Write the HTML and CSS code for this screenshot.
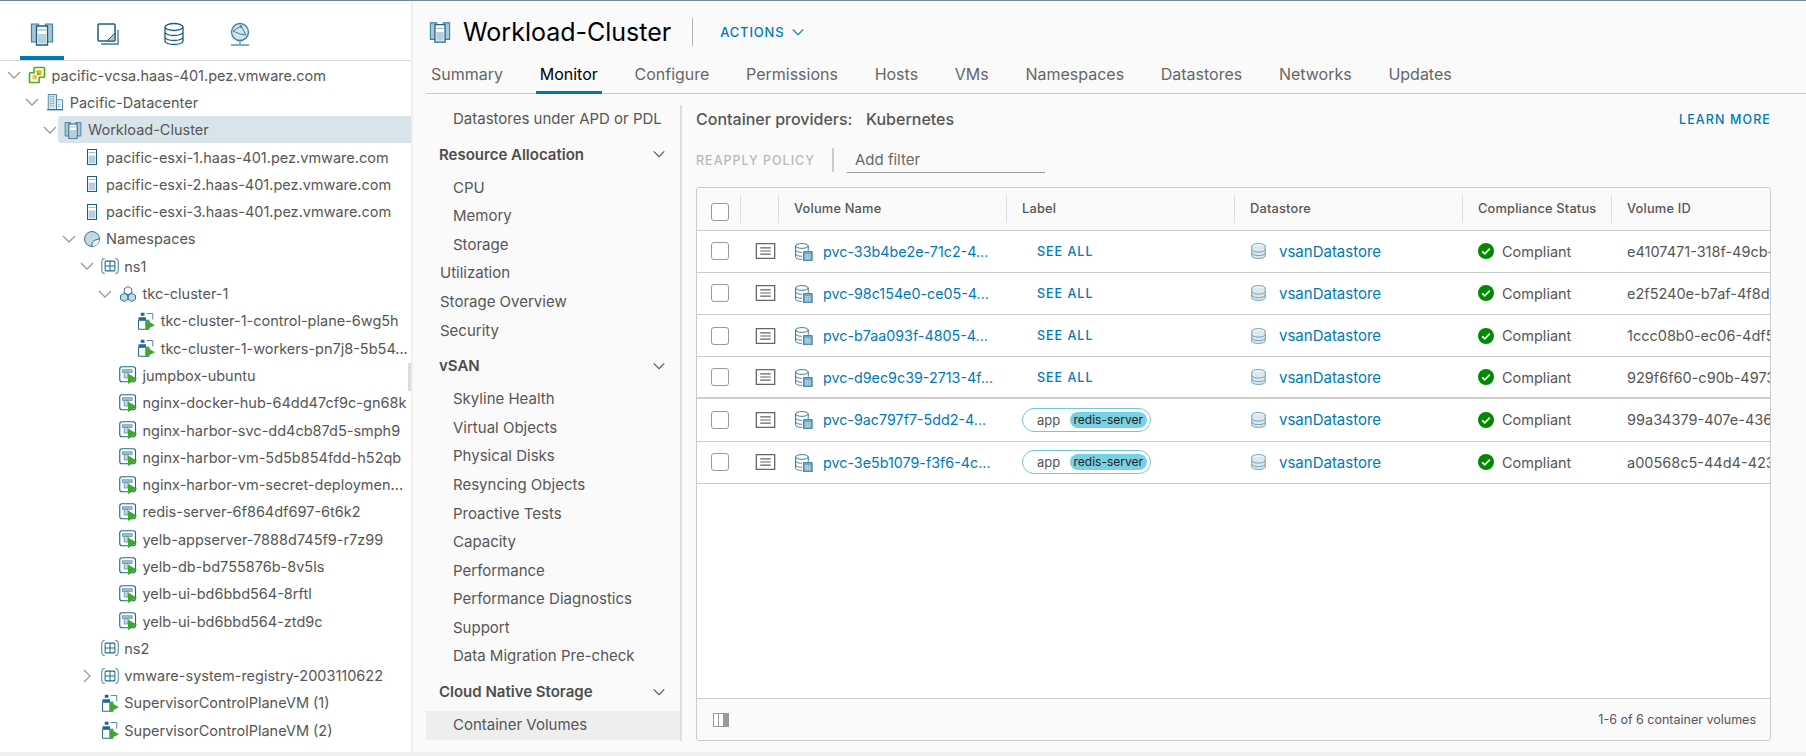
FILE: index.html
```html
<!DOCTYPE html>
<html lang="en">
<head>
    <meta charset="UTF-8">
    <title>Workload-Cluster - Monitor</title>
    <link rel="stylesheet" href="styles.css">
</head>
<body>
    <svg class="icon-defs" xmlns="http://www.w3.org/2000/svg">
        <symbol id="i-cluster" viewBox="0 0 24 24">
            <path d="M1.500 2h7v18h-7z M15.500 2h7v18h-7z" fill="#a9c6d4" stroke="#3f7f9f" stroke-width="1.200"/>
            <path d="M6.500 4h11v19h-11z" fill="#fff" stroke="#1d5f82" stroke-width="1.400"/>
            <path d="M8 12h8v9.500H8z" fill="#b5cfdb"/>
            <path d="M8 8h8" stroke="#7ea6ba" stroke-width="1"/>
        </symbol>
        <symbol id="i-storage-tab" viewBox="0 0 24 24">
            <rect x="2" y="2" width="17" height="17" rx="1" fill="#fff" stroke="#1d5f82" stroke-width="1.500"/>
            <path d="M5 22h17V8" fill="none" stroke="#3f7f9f" stroke-width="1.400"/>
            <path d="M11 19l8-8v8z" fill="#a9c6d4" stroke="#1d5f82" stroke-width="1"/>
        </symbol>
        <symbol id="i-database" viewBox="0 0 24 24">
            <ellipse cx="12" cy="5" rx="9" ry="3.500" fill="#fff" stroke="#1d5f82" stroke-width="1.300"/>
            <path d="M3 5v14c0 2 4 3.500 9 3.500s9-1.500 9-3.500V5 M3 10c0 2 4 3.500 9 3.500s9-1.500 9-3.500 M3 15c0 2 4 3.500 9 3.500s9-1.500 9-3.500" fill="none" stroke="#1d5f82" stroke-width="1.300"/>
        </symbol>
        <symbol id="i-globe" viewBox="0 0 24 24">
            <circle cx="12" cy="10" r="8.500" fill="#d5e3ea" stroke="#3f7f9f" stroke-width="1.300"/>
            <path d="M5 9l8-5 5 9-6-1z" fill="none" stroke="#3f7f9f" stroke-width="1"/>
            <circle cx="13" cy="4.500" r="1.300" fill="#3f7f9f"/>
            <path d="M12 18.500V22 M3 23h18" stroke="#5c93ad" stroke-width="1.400"/>
        </symbol>
        <symbol id="i-vcenter" viewBox="0 0 24 24">
            <path d="M9 2h12a1 1 0 0 1 1 1v11a1 1 0 0 1-1 1h-6v6a1 1 0 0 1-1 1H3a1 1 0 0 1-1-1V10a1 1 0 0 1 1-1h5V3a1 1 0 0 1 1-1z" fill="#fff" stroke="#4cb018" stroke-width="2.200"/>
            <path d="M11 5.500h7v7h-3V9h-4z" fill="#f5a81c"/>
            <path d="M6 12h6v6H6z" fill="#f5c04a"/>
            <path d="M12 9h3v3h-3z" fill="#4cb018"/>
        </symbol>
        <symbol id="i-datacenter" viewBox="0 0 24 24">
            <path d="M3 2h11v20H3z" fill="#d6e4eb" stroke="#3f7f9f" stroke-width="1.200"/>
            <path d="M14 9h8v13h-8z" fill="#fff" stroke="#3f7f9f" stroke-width="1.200"/>
            <path d="M5.500 5h6 M5.500 8h6 M5.500 11h6 M5.500 14h6 M5.500 17h6 M16 12h4 M16 15h4 M16 18h4" stroke="#5c93ad" stroke-width="1.300" stroke-dasharray="1.200 .8"/>
            <path d="M1 22.500h22" stroke="#1d5f82" stroke-width="1.200"/>
        </symbol>
        <symbol id="i-host" viewBox="0 0 24 24">
            <path d="M6 2h12v20H6z" fill="#fff" stroke="#1d5f82" stroke-width="1.400"/>
            <path d="M7.500 10h9v10.500h-9z" fill="#b5cfdb"/>
            <path d="M7.500 6h9" stroke="#7ea6ba" stroke-width="1"/>
        </symbol>
        <symbol id="i-namespaces" viewBox="0 0 24 24">
            <circle cx="12" cy="12" r="10" fill="#c5d9e3" stroke="#2f7394" stroke-width="1.300"/>
            <path d="M12.500 21.800c-.6-5 1-8.800 9.300-9.300A10 10 0 0 1 12.500 21.800z" fill="#eaf1f5"/>
            <path d="M12 22c-1-5 1-9 10-10" fill="none" stroke="#2f7394" stroke-width="1.300"/>
        </symbol>
        <symbol id="i-ns" viewBox="0 0 24 24">
            <path d="M5 2C1.500 2 1 3.500 1 7v10c0 3.500 .5 5 4 5 M19 2c3.500 0 4 1.500 4 5v10c0 3.500-.5 5-4 5" fill="none" stroke="#4d8aa6" stroke-width="1.400"/>
            <rect x="5.500" y="5.500" width="13" height="13" rx="1" fill="#fff" stroke="#1d6a8e" stroke-width="1.400"/>
            <path d="M12 5.500v13 M5.500 12h13" stroke="#1d6a8e" stroke-width="1.400"/>
        </symbol>
        <symbol id="i-tkc" viewBox="0 0 24 24">
            <path d="M12 2l5 3v5l-5 3-5-3V5z" fill="#fff" stroke="#1d6a8e" stroke-width="1.200"/>
            <path d="M7 11l5 3v5l-5 3-5-3v-5z M17 11l5 3v5l-5 3-5-3v-5z" fill="#c5d9e3" stroke="#1d6a8e" stroke-width="1.200"/>
        </symbol>
        <symbol id="i-vm" viewBox="0 0 24 24">
            <rect x="1" y="1" width="21" height="20" rx="3" fill="#fff" stroke="#1d6a8e" stroke-width="1.500"/>
            <path d="M4.500 5h13v3.500h-13z" fill="#a9c6d4" stroke="#4d8aa6" stroke-width="1"/>
            <path d="M7 8.500v7.500h5V8.500z" fill="#c5d9e3" stroke="#4d8aa6" stroke-width="1"/>
            <path d="M12 10l12 7-12 7z" fill="#3fa82c"/>
        </symbol>
        <symbol id="i-pod" viewBox="0 0 24 24">
            <path d="M2 11h14v12H2z" fill="#fff" stroke="#1d6a8e" stroke-width="1.300"/>
            <path d="M13 2h8v8" fill="none" stroke="#4d8aa6" stroke-width="1.300"/>
            <path d="M5 1h5v4H5z" fill="#1d6a8e"/>
            <path d="M2 7h10v4H2z" fill="#1d6a8e"/>
            <path d="M11 10l13 7.500L11 24z" fill="#3fa82c"/>
        </symbol>
        <symbol id="i-details" viewBox="0 0 24 20">
            <path d="M1.500 1.500h21v17h-21z" fill="#fff" stroke="#666" stroke-width="1.500"/>
            <path d="M6 6.500h12 M6 10h12 M6 13.500h12" stroke="#666" stroke-width="1.300"/>
        </symbol>
        <symbol id="i-volume" viewBox="0 0 24 24">
            <ellipse cx="10" cy="5" rx="8" ry="3" fill="#fff" stroke="#2f7394" stroke-width="1.200"/>
            <path d="M2 5v14c0 1.700 3.500 3 8 3 M18 5v6 M2 10c0 1.700 3.500 3 8 3 M2 15c0 1.700 3.500 3 8 3" fill="none" stroke="#2f7394" stroke-width="1.200"/>
            <path d="M12 12h11v12H12z" fill="#6fa5bf" stroke="#2f7394" stroke-width="1"/>
            <path d="M15 15v7 M17.500 15v7 M20 15v7" stroke="#fff" stroke-width=".9"/>
        </symbol>
        <symbol id="i-datastore" viewBox="0 0 24 24">
            <ellipse cx="12" cy="5" rx="9.500" ry="3.500" fill="#eef4f7" stroke="#5c93ad" stroke-width="1.200"/>
            <path d="M2.500 5v14c0 2 4.300 3.500 9.500 3.500s9.500-1.500 9.500-3.500V5" fill="#dce8ee" stroke="#5c93ad" stroke-width="1.200"/>
            <path d="M2.500 10c0 2 4.300 3.500 9.500 3.500s9.500-1.500 9.500-3.500 M2.500 15c0 2 4.300 3.500 9.500 3.500s9.500-1.500 9.500-3.500" fill="none" stroke="#5c93ad" stroke-width="1.200"/>
        </symbol>
        <symbol id="i-ok" viewBox="0 0 16 16">
            <circle cx="8" cy="8" r="8" fill="#008a00"/>
            <path d="M4.200 8.300l2.600 2.600 5-5.200" fill="none" stroke="#fff" stroke-width="1.700"/>
        </symbol>
        <symbol id="i-columns" viewBox="0 0 16 14">
            <path d="M.5 .5h15v13H.5z" fill="#fff" stroke="#999"/>
            <path d="M5.500 .5v13" stroke="#999"/>
            <path d="M10 0h6v14h-6z" fill="#999"/>
        </symbol>
        <symbol id="i-chev-down" viewBox="0 0 16 16">
            <path d="M2 5l6 6 6-6" fill="none" stroke="currentColor" stroke-width="1.300"/>
        </symbol>
        <symbol id="i-chev-right" viewBox="0 0 16 16">
            <path d="M5 2l6 6-6 6" fill="none" stroke="currentColor" stroke-width="1.300"/>
        </symbol>
    </svg>

    <div class="app">
        <aside class="tree-panel">
            <div class="object-tabs">
                <div class="object-tab active"><svg class="tab-icon"><use href="#i-cluster"/></svg></div>
                <div class="object-tab"><svg class="tab-icon"><use href="#i-storage-tab"/></svg></div>
                <div class="object-tab"><svg class="tab-icon"><use href="#i-database"/></svg></div>
                <div class="object-tab"><svg class="tab-icon"><use href="#i-globe"/></svg></div>
            </div>

            <div class="tree">
                <div class="tree-row lvl-0"><svg class="chev"><use href="#i-chev-down"/></svg><div class="tree-label"><svg class="tree-icon"><use href="#i-vcenter"/></svg><span>pacific-vcsa.haas-401.pez.vmware.com</span></div></div>
                <div class="tree-row lvl-1"><svg class="chev"><use href="#i-chev-down"/></svg><div class="tree-label"><svg class="tree-icon"><use href="#i-datacenter"/></svg><span>Pacific-Datacenter</span></div></div>
                <div class="tree-row lvl-2"><svg class="chev"><use href="#i-chev-down"/></svg><div class="tree-label selected"><svg class="tree-icon"><use href="#i-cluster"/></svg><span>Workload-Cluster</span></div></div>
                <div class="tree-row lvl-3"><div class="chev"></div><div class="tree-label"><svg class="tree-icon"><use href="#i-host"/></svg><span>pacific-esxi-1.haas-401.pez.vmware.com</span></div></div>
                <div class="tree-row lvl-3"><div class="chev"></div><div class="tree-label"><svg class="tree-icon"><use href="#i-host"/></svg><span>pacific-esxi-2.haas-401.pez.vmware.com</span></div></div>
                <div class="tree-row lvl-3"><div class="chev"></div><div class="tree-label"><svg class="tree-icon"><use href="#i-host"/></svg><span>pacific-esxi-3.haas-401.pez.vmware.com</span></div></div>
                <div class="tree-row lvl-3"><svg class="chev"><use href="#i-chev-down"/></svg><div class="tree-label"><svg class="tree-icon"><use href="#i-namespaces"/></svg><span>Namespaces</span></div></div>
                <div class="tree-row lvl-4"><svg class="chev"><use href="#i-chev-down"/></svg><div class="tree-label"><svg class="tree-icon"><use href="#i-ns"/></svg><span>ns1</span></div></div>
                <div class="tree-row lvl-5"><svg class="chev"><use href="#i-chev-down"/></svg><div class="tree-label"><svg class="tree-icon"><use href="#i-tkc"/></svg><span>tkc-cluster-1</span></div></div>
                <div class="tree-row lvl-6"><div class="chev"></div><div class="tree-label"><svg class="tree-icon"><use href="#i-pod"/></svg><span>tkc-cluster-1-control-plane-6wg5h</span></div></div>
                <div class="tree-row lvl-6"><div class="chev"></div><div class="tree-label"><svg class="tree-icon"><use href="#i-pod"/></svg><span>tkc-cluster-1-workers-pn7j8-5b54...</span></div></div>
                <div class="tree-row lvl-5"><div class="chev"></div><div class="tree-label"><svg class="tree-icon"><use href="#i-vm"/></svg><span>jumpbox-ubuntu</span></div></div>
                <div class="tree-row lvl-5"><div class="chev"></div><div class="tree-label"><svg class="tree-icon"><use href="#i-vm"/></svg><span>nginx-docker-hub-64dd47cf9c-gn68k</span></div></div>
                <div class="tree-row lvl-5"><div class="chev"></div><div class="tree-label"><svg class="tree-icon"><use href="#i-vm"/></svg><span>nginx-harbor-svc-dd4cb87d5-smph9</span></div></div>
                <div class="tree-row lvl-5"><div class="chev"></div><div class="tree-label"><svg class="tree-icon"><use href="#i-vm"/></svg><span>nginx-harbor-vm-5d5b854fdd-h52qb</span></div></div>
                <div class="tree-row lvl-5"><div class="chev"></div><div class="tree-label"><svg class="tree-icon"><use href="#i-vm"/></svg><span>nginx-harbor-vm-secret-deploymen...</span></div></div>
                <div class="tree-row lvl-5"><div class="chev"></div><div class="tree-label"><svg class="tree-icon"><use href="#i-vm"/></svg><span>redis-server-6f864df697-6t6k2</span></div></div>
                <div class="tree-row lvl-5"><div class="chev"></div><div class="tree-label"><svg class="tree-icon"><use href="#i-vm"/></svg><span>yelb-appserver-7888d745f9-r7z99</span></div></div>
                <div class="tree-row lvl-5"><div class="chev"></div><div class="tree-label"><svg class="tree-icon"><use href="#i-vm"/></svg><span>yelb-db-bd755876b-8v5ls</span></div></div>
                <div class="tree-row lvl-5"><div class="chev"></div><div class="tree-label"><svg class="tree-icon"><use href="#i-vm"/></svg><span>yelb-ui-bd6bbd564-8rftl</span></div></div>
                <div class="tree-row lvl-5"><div class="chev"></div><div class="tree-label"><svg class="tree-icon"><use href="#i-vm"/></svg><span>yelb-ui-bd6bbd564-ztd9c</span></div></div>
                <div class="tree-row lvl-4"><div class="chev"></div><div class="tree-label"><svg class="tree-icon"><use href="#i-ns"/></svg><span>ns2</span></div></div>
                <div class="tree-row lvl-4"><svg class="chev"><use href="#i-chev-right"/></svg><div class="tree-label"><svg class="tree-icon"><use href="#i-ns"/></svg><span>vmware-system-registry-2003110622</span></div></div>
                <div class="tree-row lvl-4"><div class="chev"></div><div class="tree-label"><svg class="tree-icon"><use href="#i-pod"/></svg><span>SupervisorControlPlaneVM (1)</span></div></div>
                <div class="tree-row lvl-4"><div class="chev"></div><div class="tree-label"><svg class="tree-icon"><use href="#i-pod"/></svg><span>SupervisorControlPlaneVM (2)</span></div></div>
            </div>
            <div class="tree-scroll-thumb"></div>
        </aside>

        <main class="main">
            <header class="page-header">
                <svg class="page-icon"><use href="#i-cluster"/></svg>
                <h1>Workload-Cluster</h1>
                <div class="page-sep"></div>
                <span class="actions">ACTIONS</span>
                <svg class="actions-chev"><use href="#i-chev-down"/></svg>
            </header>

            <nav class="main-tabs">
                <span class="main-tab">Summary</span>
                <span class="main-tab active">Monitor</span>
                <span class="main-tab">Configure</span>
                <span class="main-tab">Permissions</span>
                <span class="main-tab">Hosts</span>
                <span class="main-tab">VMs</span>
                <span class="main-tab">Namespaces</span>
                <span class="main-tab">Datastores</span>
                <span class="main-tab">Networks</span>
                <span class="main-tab">Updates</span>
            </nav>

            <div class="monitor">
                <div class="side-nav">
                    <div class="nav-item sub">Datastores under APD or PDL</div>
                    <div class="nav-head">Resource Allocation<svg class="nav-chev"><use href="#i-chev-down"/></svg></div>
                    <div class="nav-item sub">CPU</div>
                    <div class="nav-item sub">Memory</div>
                    <div class="nav-item sub">Storage</div>
                    <div class="nav-item">Utilization</div>
                    <div class="nav-item">Storage Overview</div>
                    <div class="nav-item">Security</div>
                    <div class="nav-head">vSAN<svg class="nav-chev"><use href="#i-chev-down"/></svg></div>
                    <div class="nav-item sub">Skyline Health</div>
                    <div class="nav-item sub">Virtual Objects</div>
                    <div class="nav-item sub">Physical Disks</div>
                    <div class="nav-item sub">Resyncing Objects</div>
                    <div class="nav-item sub">Proactive Tests</div>
                    <div class="nav-item sub">Capacity</div>
                    <div class="nav-item sub">Performance</div>
                    <div class="nav-item sub">Performance Diagnostics</div>
                    <div class="nav-item sub">Support</div>
                    <div class="nav-item sub">Data Migration Pre-check</div>
                    <div class="nav-head">Cloud Native Storage<svg class="nav-chev"><use href="#i-chev-down"/></svg></div>
                    <div class="nav-item sub current">Container Volumes</div>
                </div>

                <section class="content">
                    <div class="providers">
                        <span class="providers-label">Container providers:</span>
                        <span class="providers-value">Kubernetes</span>
                        <span class="learn-more">LEARN MORE</span>
                    </div>

                    <div class="toolbar">
                        <span class="reapply">REAPPLY POLICY</span>
                        <div class="toolbar-sep"></div>
                        <div class="filter">Add filter</div>
                    </div>

                    <div class="grid">
                        <div class="grid-body">
                            <div class="grid-row grid-head">
                                <div class="cell head"><div class="check"></div></div>
                                <div class="cell head"></div>
                                <div class="cell head">Volume Name</div>
                                <div class="cell head">Label</div>
                                <div class="cell head">Datastore</div>
                                <div class="cell head">Compliance Status</div>
                                <div class="cell head">Volume ID</div>
                            </div>

                            <div class="grid-row">
                                <div class="cell"><div class="check"></div></div>
                                <div class="cell"><svg class="details"><use href="#i-details"/></svg></div>
                                <div class="cell"><svg class="vol-icon"><use href="#i-volume"/></svg><a class="link">pvc-33b4be2e-71c2-4...</a></div>
                                <div class="cell"><a class="see-all">SEE ALL</a></div>
                                <div class="cell"><svg class="ds-icon"><use href="#i-datastore"/></svg><a class="link">vsanDatastore</a></div>
                                <div class="cell"><svg class="ok-icon"><use href="#i-ok"/></svg>Compliant</div>
                                <div class="cell">e4107471-318f-49cb-a5d1-7f0e</div>
                            </div>
                            <div class="grid-row">
                                <div class="cell"><div class="check"></div></div>
                                <div class="cell"><svg class="details"><use href="#i-details"/></svg></div>
                                <div class="cell"><svg class="vol-icon"><use href="#i-volume"/></svg><a class="link">pvc-98c154e0-ce05-4...</a></div>
                                <div class="cell"><a class="see-all">SEE ALL</a></div>
                                <div class="cell"><svg class="ds-icon"><use href="#i-datastore"/></svg><a class="link">vsanDatastore</a></div>
                                <div class="cell"><svg class="ok-icon"><use href="#i-ok"/></svg>Compliant</div>
                                <div class="cell">e2f5240e-b7af-4f8d-9c21-6a1b</div>
                            </div>
                            <div class="grid-row">
                                <div class="cell"><div class="check"></div></div>
                                <div class="cell"><svg class="details"><use href="#i-details"/></svg></div>
                                <div class="cell"><svg class="vol-icon"><use href="#i-volume"/></svg><a class="link">pvc-b7aa093f-4805-4...</a></div>
                                <div class="cell"><a class="see-all">SEE ALL</a></div>
                                <div class="cell"><svg class="ds-icon"><use href="#i-datastore"/></svg><a class="link">vsanDatastore</a></div>
                                <div class="cell"><svg class="ok-icon"><use href="#i-ok"/></svg>Compliant</div>
                                <div class="cell">1ccc08b0-ec06-4df5-8e12-3d7c</div>
                            </div>
                            <div class="grid-row thick">
                                <div class="cell"><div class="check"></div></div>
                                <div class="cell"><svg class="details"><use href="#i-details"/></svg></div>
                                <div class="cell"><svg class="vol-icon"><use href="#i-volume"/></svg><a class="link">pvc-d9ec9c39-2713-4f...</a></div>
                                <div class="cell"><a class="see-all">SEE ALL</a></div>
                                <div class="cell"><svg class="ds-icon"><use href="#i-datastore"/></svg><a class="link">vsanDatastore</a></div>
                                <div class="cell"><svg class="ok-icon"><use href="#i-ok"/></svg>Compliant</div>
                                <div class="cell">929f6f60-c90b-4973-b1a4-2e8d</div>
                            </div>
                            <div class="grid-row">
                                <div class="cell"><div class="check"></div></div>
                                <div class="cell"><svg class="details"><use href="#i-details"/></svg></div>
                                <div class="cell"><svg class="vol-icon"><use href="#i-volume"/></svg><a class="link">pvc-9ac797f7-5dd2-4...</a></div>
                                <div class="cell"><div class="label-pill"><span class="label-key">app</span><span class="label-value">redis-server</span></div></div>
                                <div class="cell"><svg class="ds-icon"><use href="#i-datastore"/></svg><a class="link">vsanDatastore</a></div>
                                <div class="cell"><svg class="ok-icon"><use href="#i-ok"/></svg>Compliant</div>
                                <div class="cell">99a34379-407e-4361-a2c7-5f9e</div>
                            </div>
                            <div class="grid-row">
                                <div class="cell"><div class="check"></div></div>
                                <div class="cell"><svg class="details"><use href="#i-details"/></svg></div>
                                <div class="cell"><svg class="vol-icon"><use href="#i-volume"/></svg><a class="link">pvc-3e5b1079-f3f6-4c...</a></div>
                                <div class="cell"><div class="label-pill"><span class="label-key">app</span><span class="label-value">redis-server</span></div></div>
                                <div class="cell"><svg class="ds-icon"><use href="#i-datastore"/></svg><a class="link">vsanDatastore</a></div>
                                <div class="cell"><svg class="ok-icon"><use href="#i-ok"/></svg>Compliant</div>
                                <div class="cell">a00568c5-44d4-4232-b6e3-1c4a</div>
                            </div>
                        </div>

                        <div class="grid-footer">
                            <svg class="columns-icon"><use href="#i-columns"/></svg>
                            <span>1-6 of 6 container volumes</span>
                        </div>
                    </div>
                </section>
            </div>
        </main>
    </div>
</body>
</html>
```

FILE: styles.css
```css
* {
    box-sizing: border-box;
}

html, body {
    margin: 0;
    height: 756px;
    overflow: hidden;
}

body {
    font-family: Inter, "Noto Sans", sans-serif;
    font-size: 14px;
    color: #565656;
    background: #efefef;
    border-top: 1px solid #6f8a9b;
}

.icon-defs {
    display: none;
}

.app {
    display: flex;
    height: 751px;
}

/* left inventory tree */
.tree-panel {
    position: relative;
    width: 411px;
    background: #fff;
    flex-shrink: 0;
    overflow: hidden;
}

.object-tabs {
    display: flex;
    gap: 22px;
    height: 60px;
    padding-left: 20px;
    border-bottom: 1px solid #d7d7d7;
}

.object-tab {
    width: 44px;
    height: 59px;
    padding-top: 21px;
    display: flex;
    justify-content: center;
}

.object-tab.active {
    border-bottom: 4px solid #0079b8;
}

.tab-icon {
    width: 24px;
    height: 24px;
}

.tree {
    padding-top: 0.5px;
}

.tree-row {
    display: flex;
    align-items: center;
    height: 27.3px;
    white-space: nowrap;
}

.lvl-0 { padding-left: 6px; }
.lvl-1 { padding-left: 24.2px; }
.lvl-2 { padding-left: 42.4px; }
.lvl-3 { padding-left: 60.6px; }
.lvl-4 { padding-left: 78.8px; }
.lvl-5 { padding-left: 97px; }
.lvl-6 { padding-left: 115.2px; }

.chev {
    width: 16px;
    height: 16px;
    flex-shrink: 0;
    color: #9a9a9a;
}

.tree-label {
    display: flex;
    align-items: center;
    gap: 5.5px;
    flex: 1;
    height: 100%;
    min-width: 0;
    padding-left: 6px;
    font-size: 14.5px;
    overflow: hidden;
}

.tree-label.selected {
    background: #d8e3ea;
    border-radius: 3px 0 0 3px;
}

.tree-icon {
    width: 18px;
    height: 18px;
    flex-shrink: 0;
}

.tree-scroll-thumb {
    position: absolute;
    right: 0;
    top: 362px;
    width: 3px;
    height: 28px;
    background: #dcdcdc;
}

/* main area */
.main {
    flex: 1;
    margin-left: 2px;
    min-width: 0;
    background: #fafafa;
    display: flex;
    flex-direction: column;
}

.page-header {
    display: flex;
    align-items: center;
    height: 62px;
    padding-left: 16px;
}

.page-icon {
    width: 22px;
    height: 22px;
}

h1 {
    margin: 0 21px 0 12px;
    font-size: 25px;
    font-weight: 400;
    color: #000;
}

.page-sep {
    width: 1px;
    height: 28px;
    background: #b5b5b5;
    margin-right: 27px;
}

.actions {
    font-size: 13px;
    font-weight: 500;
    letter-spacing: 0.8px;
    color: #0079b8;
}

.actions-chev {
    width: 14px;
    height: 14px;
    margin-left: 7px;
    color: #0079b8;
}

.main-tabs {
    display: flex;
    gap: 36.7px;
    height: 31px;
    margin-left: 13px;
    padding-left: 5px;
    border-bottom: 1px solid #ccc;
    flex-shrink: 0;
}

.main-tab {
    font-size: 16px;
    color: #666;
    line-height: 23px;
    padding: 0 4px;
    margin: 0 -4px;
    height: 31px;
}

.main-tab.active {
    color: #000;
    border-bottom: 3px solid #0079b8;
}

.monitor {
    flex: 1;
    display: flex;
    min-height: 0;
}

/* side menu of the monitor tab */
.side-nav {
    width: 256px;
    margin: 11px 0 11px 13px;
    border-right: 2px solid #dedede;
    font-size: 15px;
    color: #565656;
    flex-shrink: 0;
}

.nav-item {
    height: 28.6px;
    line-height: 28.6px;
    padding-left: 14px;
}

.nav-item.sub {
    padding-left: 27px;
}

.nav-item.current {
    background: #eee;
}

.nav-head {
    display: flex;
    align-items: center;
    justify-content: space-between;
    height: 28.6px;
    margin: 6.5px 0 4.9px;
    padding: 0 14px 0 13px;
    font-weight: 600;
    color: #4d4d4d;
}

.nav-chev {
    width: 14px;
    height: 14px;
    color: #565656;
}

.content {
    flex: 1;
    min-width: 0;
    padding: 13px 35px 11px 14px;
    display: flex;
    flex-direction: column;
}

.providers {
    display: flex;
    align-items: center;
    height: 24px;
    font-size: 16px;
    font-weight: 500;
}

.providers-label {
    width: 170px;
}

.learn-more {
    margin-left: auto;
    font-size: 12.5px;
    font-weight: 500;
    letter-spacing: 1.1px;
    color: #0079b8;
}

.toolbar {
    display: flex;
    align-items: center;
    height: 26px;
    margin-top: 16px;
}

.reapply {
    width: 136px;
    font-size: 12.5px;
    font-weight: 500;
    letter-spacing: 1px;
    color: #b9b9b9;
}

.toolbar-sep {
    width: 2px;
    height: 24px;
    background: #ccc;
}

.filter {
    width: 198px;
    height: 26px;
    margin-left: 13px;
    padding-left: 8px;
    line-height: 26px;
    border-bottom: 1px solid #9a9a9a;
    font-size: 15px;
    color: #6a6a6a;
}

.grid {
    flex: 1;
    min-height: 0;
    margin-top: 14px;
    border: 1px solid #ccc;
    border-radius: 3px;
    background: #fff;
    display: flex;
    flex-direction: column;
    overflow: hidden;
}

.grid-body {
    flex: 1;
    min-height: 0;
    overflow: hidden;
}

.grid-row {
    display: grid;
    grid-template-columns: 44px 38px 228px 228px 228px 149px 300px;
    height: 42.2px;
    border-bottom: 1px solid #ccc;
}

.grid-row.thick {
    border-bottom-width: 2px;
}

.grid-head {
    height: 42.6px;
    background: #fafafa;
}

.cell {
    display: flex;
    align-items: center;
    padding-left: 15px;
    font-size: 14.5px;
    white-space: nowrap;
    overflow: hidden;
}

.cell.head {
    font-size: 12.8px;
    font-weight: 500;
    letter-spacing: 0.2px;
    color: #565656;
    background: linear-gradient(#ddd, #ddd) right center / 1px 28px no-repeat;
}

.check {
    width: 18px;
    height: 18px;
    margin-left: -1px;
    border: 1px solid #9a9a9a;
    border-radius: 3px;
    background: #fff;
    flex-shrink: 0;
}

.grid-head .check {
    margin-top: 6px;
}

.details {
    width: 21px;
    height: 18px;
    margin-left: -1px;
}

.vol-icon {
    width: 19px;
    height: 19px;
    margin-right: 10px;
    flex-shrink: 0;
}

.link {
    color: #0079b8;
    font-size: 14.3px;
}

.ds-icon + .link {
    font-size: 15px;
}

.see-all {
    margin-left: 15px;
    font-size: 12.5px;
    font-weight: 500;
    letter-spacing: 1px;
    color: #0079b8;
}

.label-pill {
    display: flex;
    align-items: center;
    justify-content: space-between;
    width: 129px;
    height: 24px;
    padding: 0 3px 0 14px;
    border: 1px solid #6cc9e0;
    border-radius: 12px;
    background: #fff;
}

.label-key {
    font-size: 13px;
    color: #565656;
}

.label-value {
    height: 16px;
    line-height: 16px;
    padding: 0 4px;
    border-radius: 8px;
    background: #79cfe4;
    font-size: 12px;
    color: #222;
}

.ds-icon {
    width: 17px;
    height: 18px;
    margin-right: 12px;
    flex-shrink: 0;
}

.ok-icon {
    width: 16px;
    height: 16px;
    margin-right: 8px;
    flex-shrink: 0;
}

.grid-footer {
    display: flex;
    align-items: center;
    justify-content: space-between;
    height: 42px;
    padding: 0 14px 0 16px;
    border-top: 1px solid #ccc;
    background: #fafafa;
    font-size: 12.5px;
    flex-shrink: 0;
}

.columns-icon {
    width: 16px;
    height: 14px;
}
```
